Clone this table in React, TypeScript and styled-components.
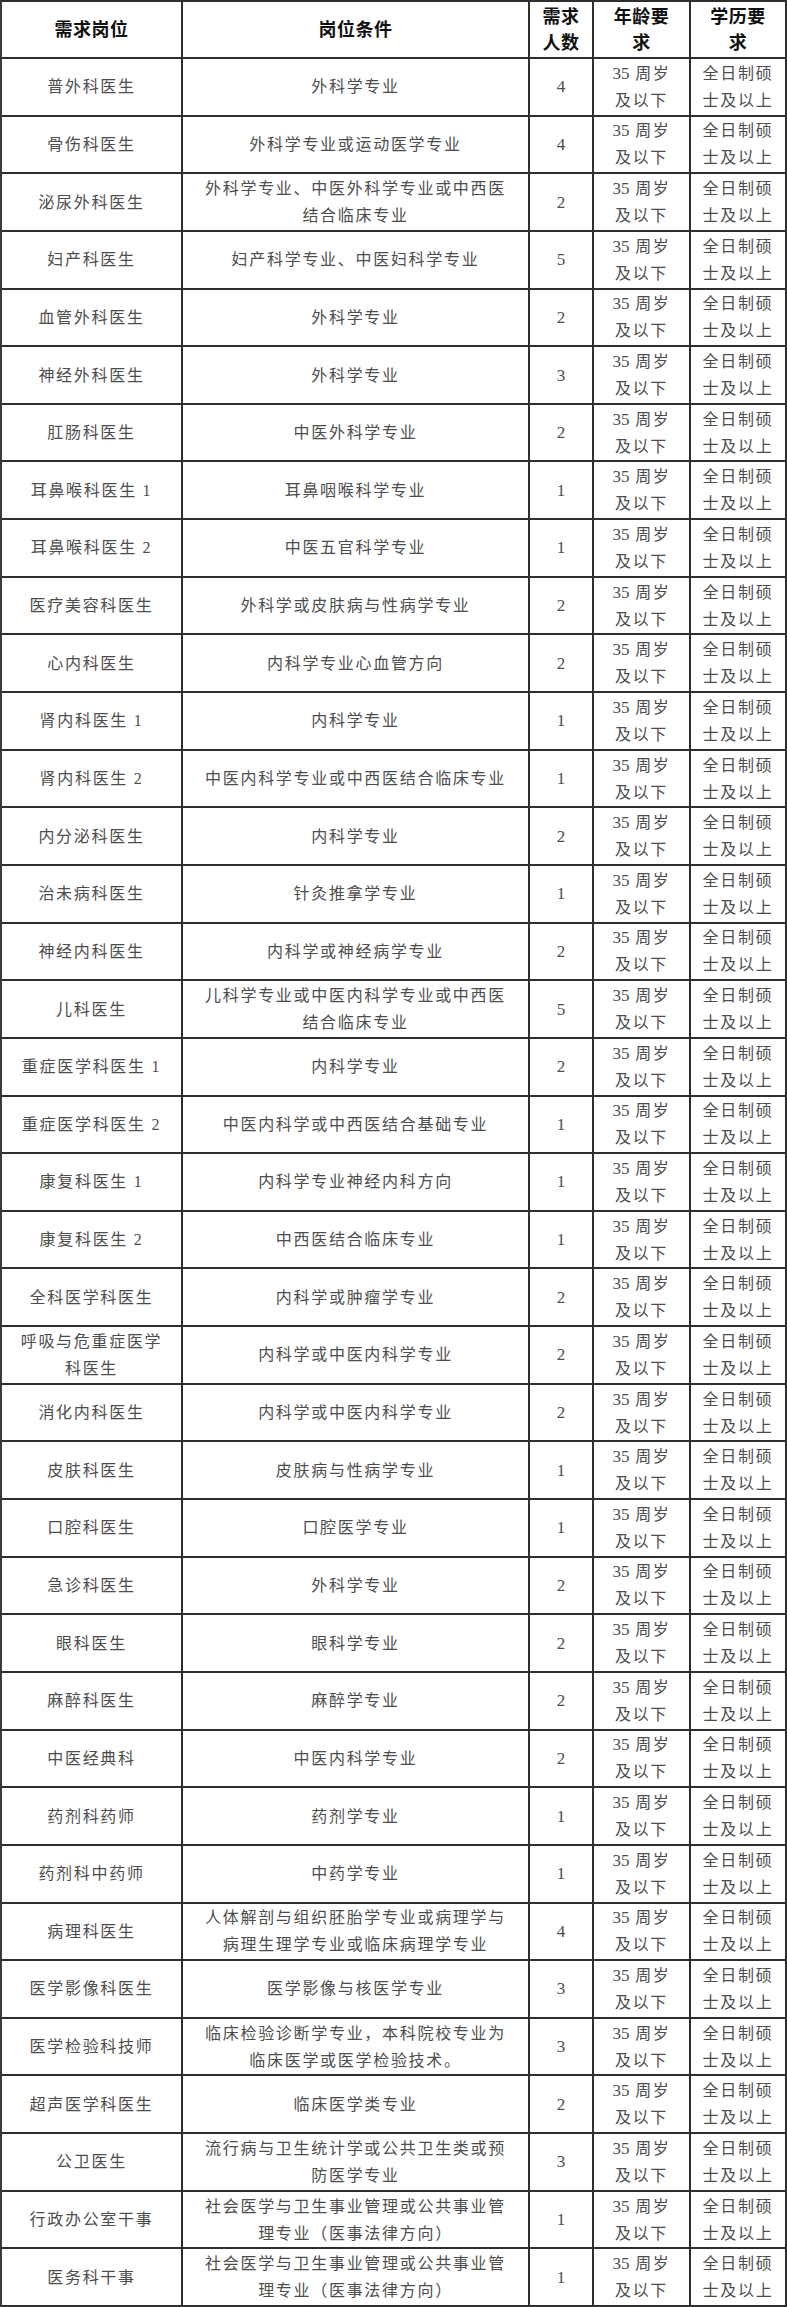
import React from 'react';
import styled, { createGlobalStyle } from 'styled-components';

const GlobalStyle = createGlobalStyle`
  html, body {
    margin: 0;
    padding: 0;
    background: #ffffff;
  }
  * {
    box-sizing: border-box;
  }
`;

interface Post {
  name: string[];
  major: string[];
  count: string;
}

const posts: Post[] = [
  { name: ['普外科医生'], major: ['外科学专业'], count: '4' },
  { name: ['骨伤科医生'], major: ['外科学专业或运动医学专业'], count: '4' },
  { name: ['泌尿外科医生'], major: ['外科学专业、中医外科学专业或中西医', '结合临床专业'], count: '2' },
  { name: ['妇产科医生'], major: ['妇产科学专业、中医妇科学专业'], count: '5' },
  { name: ['血管外科医生'], major: ['外科学专业'], count: '2' },
  { name: ['神经外科医生'], major: ['外科学专业'], count: '3' },
  { name: ['肛肠科医生'], major: ['中医外科学专业'], count: '2' },
  { name: ['耳鼻喉科医生 1'], major: ['耳鼻咽喉科学专业'], count: '1' },
  { name: ['耳鼻喉科医生 2'], major: ['中医五官科学专业'], count: '1' },
  { name: ['医疗美容科医生'], major: ['外科学或皮肤病与性病学专业'], count: '2' },
  { name: ['心内科医生'], major: ['内科学专业心血管方向'], count: '2' },
  { name: ['肾内科医生 1'], major: ['内科学专业'], count: '1' },
  { name: ['肾内科医生 2'], major: ['中医内科学专业或中西医结合临床专业'], count: '1' },
  { name: ['内分泌科医生'], major: ['内科学专业'], count: '2' },
  { name: ['治未病科医生'], major: ['针灸推拿学专业'], count: '1' },
  { name: ['神经内科医生'], major: ['内科学或神经病学专业'], count: '2' },
  { name: ['儿科医生'], major: ['儿科学专业或中医内科学专业或中西医', '结合临床专业'], count: '5' },
  { name: ['重症医学科医生 1'], major: ['内科学专业'], count: '2' },
  { name: ['重症医学科医生 2'], major: ['中医内科学或中西医结合基础专业'], count: '1' },
  { name: ['康复科医生 1'], major: ['内科学专业神经内科方向'], count: '1' },
  { name: ['康复科医生 2'], major: ['中西医结合临床专业'], count: '1' },
  { name: ['全科医学科医生'], major: ['内科学或肿瘤学专业'], count: '2' },
  { name: ['呼吸与危重症医学', '科医生'], major: ['内科学或中医内科学专业'], count: '2' },
  { name: ['消化内科医生'], major: ['内科学或中医内科学专业'], count: '2' },
  { name: ['皮肤科医生'], major: ['皮肤病与性病学专业'], count: '1' },
  { name: ['口腔科医生'], major: ['口腔医学专业'], count: '1' },
  { name: ['急诊科医生'], major: ['外科学专业'], count: '2' },
  { name: ['眼科医生'], major: ['眼科学专业'], count: '2' },
  { name: ['麻醉科医生'], major: ['麻醉学专业'], count: '2' },
  { name: ['中医经典科'], major: ['中医内科学专业'], count: '2' },
  { name: ['药剂科药师'], major: ['药剂学专业'], count: '1' },
  { name: ['药剂科中药师'], major: ['中药学专业'], count: '1' },
  { name: ['病理科医生'], major: ['人体解剖与组织胚胎学专业或病理学与', '病理生理学专业或临床病理学专业'], count: '4' },
  { name: ['医学影像科医生'], major: ['医学影像与核医学专业'], count: '3' },
  { name: ['医学检验科技师'], major: ['临床检验诊断学专业，本科院校专业为', '临床医学或医学检验技术。'], count: '3' },
  { name: ['超声医学科医生'], major: ['临床医学类专业'], count: '2' },
  { name: ['公卫医生'], major: ['流行病与卫生统计学或公共卫生类或预', '防医学专业'], count: '3' },
  { name: ['行政办公室干事'], major: ['社会医学与卫生事业管理或公共事业管', '理专业（医事法律方向）'], count: '1' },
  { name: ['医务科干事'], major: ['社会医学与卫生事业管理或公共事业管', '理专业（医事法律方向）'], count: '1' },
];

const headers: string[][] = [
  ['需求岗位'],
  ['岗位条件'],
  ['需求', '人数'],
  ['年龄要', '求'],
  ['学历要', '求'],
];

const Table = styled.div`
  width: 787px;
  height: 2307px;
  display: flex;
  flex-direction: column;
  border-top: 2px solid #2e2e2e;
  border-left: 2px solid #3a3a3a;
  overflow: hidden;
`;

const Row = styled.div<{ $head?: boolean }>`
  display: grid;
  grid-template-columns: 181px 347px 64px 97px 96px;
  flex: ${({ $head }) => ($head ? '0 0 57px' : '1 1 0')};
  min-height: 0;
  border-bottom: 2px solid #2e2e2e;
`;

const Cell = styled.div<{ $head?: boolean }>`
  display: flex;
  flex-direction: column;
  align-items: center;
  justify-content: center;
  text-align: center;
  min-height: 0;
  border-right: 2px solid #2e2e2e;
  white-space: nowrap;
  font-family: 'Liberation Serif', 'Noto Sans CJK SC', serif;
  font-size: ${({ $head }) => ($head ? '18px' : '16px')};
  font-weight: ${({ $head }) => ($head ? 700 : 400)};
  letter-spacing: ${({ $head }) => ($head ? '0.5px' : '1.7px')};
  line-height: ${({ $head }) => ($head ? '26px' : '27px')};
  color: ${({ $head }) => ($head ? '#111111' : '#4d4d4d')};
`;

const Line = styled.span`
  display: block;
`;

const Num = styled.span`
  font-size: 17px;
  letter-spacing: 0;
`;

const lines = (items: string[]) =>
  items.map((t, i) => <Line key={i}>{t}</Line>);

export default function App() {
  return (
    <>
      <GlobalStyle />
      <Table>
        <Row $head>
          {headers.map((h, i) => (
            <Cell $head key={i}>
              {lines(h)}
            </Cell>
          ))}
        </Row>
        {posts.map((p, i) => (
          <Row key={i}>
            <Cell>{lines(p.name)}</Cell>
            <Cell>{lines(p.major)}</Cell>
            <Cell>
              <Num>{p.count}</Num>
            </Cell>
            <Cell>
              <Line>
                <Num>35</Num> 周岁
              </Line>
              <Line>及以下</Line>
            </Cell>
            <Cell>{lines(['全日制硕', '士及以上'])}</Cell>
          </Row>
        ))}
      </Table>
    </>
  );
}
